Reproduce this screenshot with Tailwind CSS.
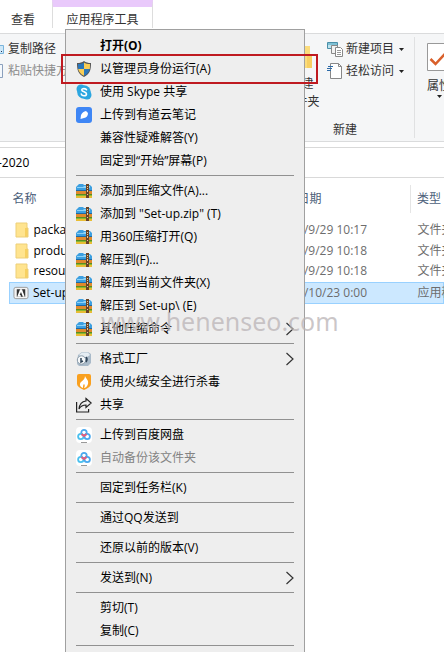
<!DOCTYPE html>
<html lang="zh-CN">
<head>
  <meta charset="UTF-8" />
  <meta name="viewport" content="width=device-width, initial-scale=1.0" />
  <title>Set-up</title>
  <script src="https://cdn.jsdelivr.net/npm/@tailwindcss/browser@4"></script>
</head>
<body class="bg-white text-black text-xs font-['Open_Sans','Noto_Sans_CJK_SC',sans-serif]">
  <!-- Shared icons -->
  <svg class="hidden" aria-hidden="true">
    <symbol id="zip" viewBox="0 0 16 16">
      <path d="M1 3 3 1h4l1 1h6l2 2v4H0V4z" fill="#3c9fe0" />
      <path d="M1 4h6l1-1h6v2H1z" fill="#8ed2f6" />
      <path d="M0 7h16v1H0z" fill="#1d6aa6" />
      <path d="M0 8h16v3H0z" fill="#e08a2c" />
      <path d="M0 11h16v2H0z" fill="#8ab834" />
      <path d="M0 13h16v2H0z" fill="#e9bd34" />
      <path d="M0 11h16v1H0z" fill="#5a8c22" />
      <path d="M10 1h3v14h-3z" fill="#6a4426" />
      <path d="M11 3h1v1h-1zM11 5h1v1h-1zM11 7h1v2h-1zM11 11h1v1h-1z" fill="#e8c9a0" />
    </symbol>
    <symbol id="folder" viewBox="0 0 14 16">
      <path d="M1 1h11v5h1v9H1z" fill="#ffe48f" />
      <path d="M10 6h3v9h-3z" fill="#f7d060" />
      <path d="M1 1h11v5h1v9H1z" fill="none" stroke="#edcf78" />
    </symbol>
    <symbol id="baidu" viewBox="0 0 16 16">
      <rect width="16" height="16" rx="4" fill="#fff" />
      <circle cx="8" cy="5.500" r="2.700" fill="none" stroke="#4aa8ee" stroke-width="1.800" />
      <circle cx="4.800" cy="9.500" r="2.700" fill="none" stroke="#4ac0ee" stroke-width="1.800" />
      <circle cx="11.200" cy="9.500" r="2.700" fill="none" stroke="#4aa8ee" stroke-width="1.800" />
      <path d="M5.500 7 8 9l2.500-2" fill="none" stroke="#ee5a78" stroke-width="1.800" />
      <path d="M5 15.500h6" stroke="#999" />
    </symbol>
    <symbol id="chevron" viewBox="0 0 8 14">
      <path d="m.5 1 6.500 6-6.500 6" fill="none" stroke="#333" stroke-width="1.200" />
    </symbol>
    <symbol id="caret" viewBox="0 0 5 3">
      <path d="M0 0h5L2.500 3z" fill="#222" />
    </symbol>
  </svg>

  <div class="relative h-screen overflow-hidden">
    <!-- Ribbon tabs -->
    <nav class="flex h-[33px] text-[#333]">
      <a href="#" class="w-[52px] pl-[11px] pt-2 leading-6">查看</a>
      <a href="#" class="h-7 w-[101px] border-x border-t-[7px] border-x-[#ddd] border-t-[#e9c9fb] pt-px text-center leading-6">应用程序工具</a>
    </nav>

    <!-- Ribbon -->
    <section class="flex h-[109px] border-y border-[#dadbdc] bg-[#f5f6f7] text-[#333]">
      <div class="w-[272px] pt-1">
        <button class="flex h-[22px] items-center gap-1 whitespace-nowrap">
          <svg class="h-4 w-1" viewBox="0 0 4 16"><path d="M0 4.500h3.500v8H0" fill="#cfe8f8" stroke="#7ab4dc" /><path d="M1 10h1v1H1z" fill="#235" /></svg>
          复制路径
        </button>
        <button class="flex h-[22px] items-center gap-1 whitespace-nowrap text-[#8d8d8d]">
          <svg class="h-4 w-1" viewBox="0 0 4 16"><path d="M0 1.500h2.500v13H0" fill="#f4f8fc" stroke="#8ba0bd" /></svg>
          粘贴快捷方式
        </button>
      </div>
      <div class="flex min-w-0 flex-1 flex-col">
        <div class="flex flex-1">
          <button class="flex w-[55px] flex-col items-center pl-1 pt-[11px] leading-[18px]">
            <svg class="mb-[6px] h-6 w-5" viewBox="0 0 20 24"><path d="M1 1h17v10l2 2v10H1z" fill="#fbdc7c" /><path d="M15 11h5v12h-5z" fill="#f7cf62" /></svg>
            <span>新建</span>
            <span>文件夹</span>
          </button>
          <div class="pt-1">
            <button class="flex h-[22px] items-center gap-[3px] whitespace-nowrap">
              <svg class="size-4" viewBox="0 0 16 16">
                <path d="M.5 1.500h10v6H.5z" fill="#bfe3ee" stroke="#4a8fa8" />
                <path d="M1 2h9v2H1z" fill="#7fc0d4" />
                <path d="M4.500 4.500h6v8h-6z" fill="#f2f2f2" stroke="#888" />
                <path d="M8.500 6.500h5l2 2v7h-7z" fill="#fff" stroke="#888" />
                <path d="M10 9.500h4M10 11.500h4M10 13.500h4" stroke="#999" />
              </svg>
              新建项目
              <svg class="ml-[2px] h-[3px] w-[5px]"><use href="#caret" /></svg>
            </button>
            <button class="flex h-[22px] items-center gap-[3px] whitespace-nowrap">
              <svg class="size-4" viewBox="0 0 16 16">
                <path d="M3.500.5h8l3 3v12h-11z" fill="#fff" stroke="#888" />
                <path d="M11.500.5v3h3" fill="none" stroke="#888" />
                <path d="M1 3.500h5M0 5.500h5M0 7.500h4" stroke="#2c6aa8" />
              </svg>
              轻松访问
              <svg class="ml-[2px] h-[3px] w-[5px]"><use href="#caret" /></svg>
            </button>
          </div>
        </div>
        <div class="pb-[2px] pl-[4px] text-center leading-[18px]">新建</div>
      </div>
      <div class="my-[3px] w-[30px] border-l border-[#e0e1e2] pt-[6px]">
        <button class="flex w-9 flex-col items-center pl-3 leading-[18px]">
          <svg class="ml-1 h-7 w-7" viewBox="0 0 28 28"><path d="M.5.5h27v27H.5z" fill="#fff" stroke="#999" /><path d="m3.500 16 5 5 12-13" fill="none" stroke="#d9602b" stroke-width="2.500" /></svg>
          <span class="mt-[6px] whitespace-nowrap">属性</span>
          <svg class="h-[3px] w-[5px]"><use href="#caret" /></svg>
        </button>
      </div>
    </section>

    <!-- Address bar -->
    <div class="mt-[5px] flex h-[31px] items-center border-y border-[#d9d9d9]">
      <input type="text" aria-label="地址" value="-2020" class="-ml-[2px] w-full outline-none" />
    </div>

    <!-- File list -->
    <div class="pl-[9px] pt-[7px]">
      <table class="w-full table-fixed border-collapse whitespace-nowrap text-left text-[#6d6d6d]">
        <thead>
          <tr class="h-7 text-[#4c607a]">
            <th class="w-[264px] p-0 pl-[3px] font-normal">名称</th>
            <th class="w-[137px] p-0 font-normal">修改日期</th>
            <th class="border-l border-[#e5e5e5] p-0 pl-[6px] font-normal">类型</th>
          </tr>
          <tr class="h-[6px]"></tr>
        </thead>
        <tbody>
          <tr class="h-[21px]">
            <td class="p-0 text-black"><div class="flex items-center gap-[5px] pl-[5px]"><svg class="h-4 w-[14px]"><use href="#folder" /></svg>packages</div></td>
            <td class="p-0 pl-[3px]">2019/9/29 10:17</td>
            <td class="p-0 pl-[7px]">文件夹</td>
          </tr>
          <tr class="h-[21px]">
            <td class="p-0 text-black"><div class="flex items-center gap-[5px] pl-[5px]"><svg class="h-4 w-[14px]"><use href="#folder" /></svg>products</div></td>
            <td class="p-0 pl-[3px]">2019/9/29 10:18</td>
            <td class="p-0 pl-[7px]">文件夹</td>
          </tr>
          <tr class="h-[21px]">
            <td class="p-0 text-black"><div class="flex items-center gap-[5px] pl-[5px]"><svg class="h-4 w-[14px]"><use href="#folder" /></svg>resources</div></td>
            <td class="p-0 pl-[3px]">2019/9/29 10:18</td>
            <td class="p-0 pl-[7px]">文件夹</td>
          </tr>
          <tr class="h-[21px] border border-[#99d1ff] bg-[#cce8ff]">
            <td class="p-0 text-black">
              <div class="flex items-center gap-1 pl-[3px]">
                <svg class="h-4 w-4" viewBox="0 0 17 16">
                  <rect x="1" y="2" width="15" height="12" rx="2" fill="#f4f4f4" stroke="#999" />
                  <path d="M4 4h9v8H4z" fill="#333" />
                  <path d="m4.500 12 3-8h2l3 8h-2l-2-5-1.500 3h1l.5 2z" fill="#fff" />
                </svg>
                Set-up
              </div>
            </td>
            <td class="p-0 pl-[3px]">2019/10/23 0:00</td>
            <td class="p-0 pl-[7px]">应用程序</td>
          </tr>
        </tbody>
      </table>
    </div>

    <!-- Context menu -->
    <div class="absolute bottom-0 left-[65px] top-[29px] w-60 border border-b-0 border-[#a0a0a0] bg-[#eeeeee] pt-1 *:px-[10px]">
      <button class="flex h-[23px] w-full items-center gap-2 font-bold"><span class="size-4"></span>打开(O)</button>
      <button class="relative flex h-[23px] w-full items-center gap-2">
        <svg class="size-4" viewBox="0 0 16 16">
          <path d="M8 0c2 1.500 4 2 7 2 0 7-1 11-7 14C2 13 1 9 1 2c3 0 5-.5 7-2z" fill="#555" />
          <path d="M8 1.500V8H2.200C2 6.500 2 4.500 2 3c2.500 0 4.500-.5 6-1.500z" fill="#2a76ba" />
          <path d="M8 1.500C9.500 2.500 11.500 3 14 3c0 1.500 0 3.500-.2 5H8z" fill="#f9cd55" />
          <path d="M2.200 8H8v6.800C4.500 13 2.800 11 2.200 8z" fill="#f9cd55" />
          <path d="M8 8h5.800c-.6 3-2.300 5-5.800 6.800z" fill="#2a76ba" />
        </svg>
        以管理员身份运行(A)
        <span class="absolute -left-[5px] -right-[14px] -top-[3px] h-[30px] border-2 border-[#bf1a20]"></span>
      </button>
      <button class="flex h-[23px] w-full items-center gap-2">
        <svg class="size-4" viewBox="0 0 16 16">
          <circle cx="5" cy="5" r="4.500" fill="#2ba6e0" /><circle cx="11" cy="11" r="4.500" fill="#2ba6e0" /><circle cx="8" cy="8" r="6.800" fill="#2ba6e0" />
          <path d="M10.500 5.800C10 4.300 5.800 4 5.800 6c0 2.200 4.700 1.400 4.700 3.900 0 2.400-4.600 2.300-5.200.2" fill="none" stroke="#fff" stroke-width="1.600" stroke-linecap="round" />
        </svg>
        使用 Skype 共享
      </button>
      <button class="flex h-[23px] w-full items-center gap-2">
        <svg class="size-4" viewBox="0 0 16 16"><rect width="16" height="16" rx="3" fill="#3e86f5" /><path d="M4.500 12 5 8c1-2.500 3-3.500 5-4l2 2c0 3-1.500 4.500-4 5z" fill="#fff" /></svg>
        上传到有道云笔记
      </button>
      <button class="flex h-[23px] w-full items-center gap-2"><span class="size-4"></span>兼容性疑难解答(Y)</button>
      <button class="flex h-[23px] w-full items-center gap-2"><span class="size-4"></span>固定到“开始”屏幕(P)</button>
      <div class="py-[3px]"><hr class="border-[#919191]" /></div>
      <button class="flex h-[23px] w-full items-center gap-2"><svg class="size-4"><use href="#zip" /></svg>添加到压缩文件(A)...</button>
      <button class="flex h-[23px] w-full items-center gap-2"><svg class="size-4"><use href="#zip" /></svg>添加到 "Set-up.zip" (T)</button>
      <button class="flex h-[23px] w-full items-center gap-2"><svg class="size-4"><use href="#zip" /></svg>用360压缩打开(Q)</button>
      <button class="flex h-[23px] w-full items-center gap-2"><svg class="size-4"><use href="#zip" /></svg>解压到(F)...</button>
      <button class="flex h-[23px] w-full items-center gap-2"><svg class="size-4"><use href="#zip" /></svg>解压到当前文件夹(X)</button>
      <button class="flex h-[23px] w-full items-center gap-2"><svg class="size-4"><use href="#zip" /></svg>解压到 Set-up\ (E)</button>
      <button class="flex h-[23px] w-full items-center gap-2"><svg class="size-4"><use href="#zip" /></svg>其他压缩命令<svg class="ml-auto h-[14px] w-2"><use href="#chevron" /></svg></button>
      <div class="py-[3px]"><hr class="border-[#919191]" /></div>
      <button class="flex h-[23px] w-full items-center gap-2">
        <svg class="size-4" viewBox="0 0 16 16">
          <path d="M2 4 6 1h6l3 2v9l-3 3H3l-2-2z" fill="#a9bac9" /><path d="M3 4 6 1.500h6L14 4l-3 2H5z" fill="#e6eef4" />
          <circle cx="5.500" cy="9" r="4.200" fill="#f5f8fa" stroke="#8a9aa8" /><path d="M5 7v4l2-1M10 6q2 2 0 5" fill="none" stroke="#2f4356" stroke-width="1.500" />
        </svg>
        格式工厂
        <svg class="ml-auto h-[14px] w-2"><use href="#chevron" /></svg>
      </button>
      <button class="flex h-[23px] w-full items-center gap-2">
        <svg class="size-4" viewBox="0 0 16 16"><path d="M3 0h10q2 0 2 2v8q0 3-7 6-7-3-7-6V2q0-2 2-2z" fill="#f9a01f" /><path d="M9 2c1 3 4 4 3 8-1 3-3 4-4 4 1-2 1-3 0-4-1 1-1 2-1 4-3-1-4-4-2-6 2-2 4-3 4-6z" fill="#fff" /></svg>
        使用火绒安全进行杀毒
      </button>
      <button class="flex h-[23px] w-full items-center gap-2">
        <svg class="size-4" viewBox="0 0 16 16" fill="none" stroke="#222" stroke-width="1.200"><path d="M.6 5v10h12v-3" /><path d="M10 1.500 15.200 6 10 10.500V8C7 8 5 8.500 3 12c.5-5 3-7.500 7-8z" /></svg>
        共享
      </button>
      <div class="py-[3px]"><hr class="border-[#919191]" /></div>
      <button class="flex h-[23px] w-full items-center gap-2"><svg class="size-4"><use href="#baidu" /></svg>上传到百度网盘</button>
      <button disabled class="flex h-[23px] w-full items-center gap-2 text-[#838383]"><svg class="size-4"><use href="#baidu" /></svg>自动备份该文件夹</button>
      <div class="py-[3px]"><hr class="border-[#919191]" /></div>
      <button class="flex h-[23px] w-full items-center gap-2"><span class="size-4"></span>固定到任务栏(K)</button>
      <div class="py-[3px]"><hr class="border-[#919191]" /></div>
      <button class="flex h-[23px] w-full items-center gap-2"><span class="size-4"></span>通过QQ发送到</button>
      <div class="py-[3px]"><hr class="border-[#919191]" /></div>
      <button class="flex h-[23px] w-full items-center gap-2"><span class="size-4"></span>还原以前的版本(V)</button>
      <div class="py-[3px]"><hr class="border-[#919191]" /></div>
      <button class="flex h-[23px] w-full items-center gap-2"><span class="size-4"></span>发送到(N)<svg class="ml-auto h-[14px] w-2"><use href="#chevron" /></svg></button>
      <div class="py-[3px]"><hr class="border-[#919191]" /></div>
      <button class="flex h-[23px] w-full items-center gap-2"><span class="size-4"></span>剪切(T)</button>
      <button class="flex h-[23px] w-full items-center gap-2"><span class="size-4"></span>复制(C)</button>
      <div class="py-[3px]"><hr class="border-[#919191]" /></div>
    </div>

    <!-- Watermark -->
    <div class="pointer-events-none absolute left-[101px] top-[305px] font-['Noto_Sans',sans-serif] text-[25px] leading-8 text-[#bab4b6]/75">www.henenseo.com</div>
  </div>
</body>
</html>
